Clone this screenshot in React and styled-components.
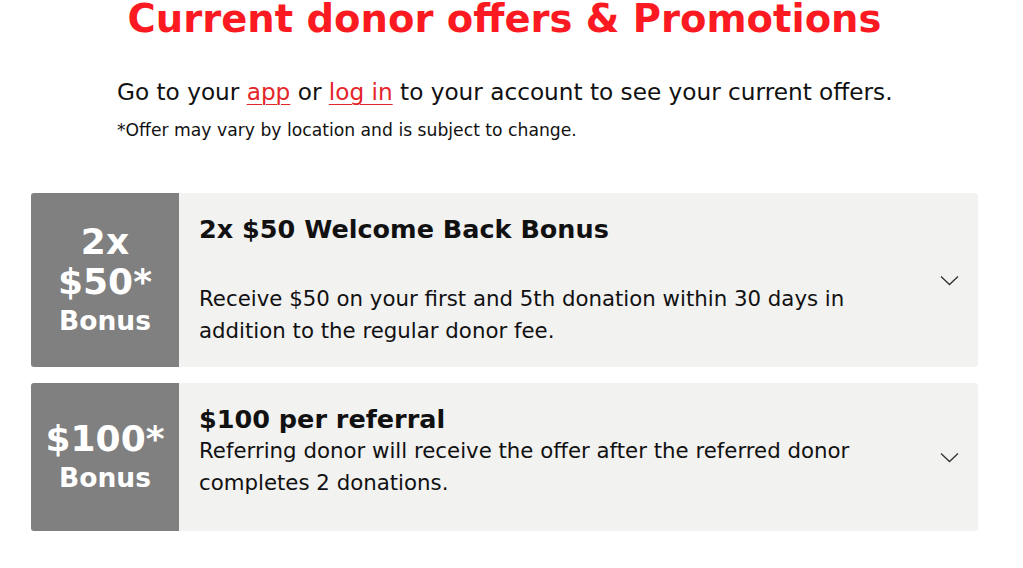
import styled, { createGlobalStyle } from "styled-components";

const GlobalStyle = createGlobalStyle`
  body {
    margin: 0;
    background: #fff;
    font-family: "DejaVu Sans", "Noto Sans", sans-serif;
    color: #111;
  }
`;

const offers = [
  {
    badge: ["2x", "$50*"],
    title: "2x $50 Welcome Back Bonus",
    text: "Receive $50 on your first and 5th donation within 30 days in addition to the regular donor fee.",
    spaced: true,
  },
  {
    badge: ["$100*"],
    title: "$100 per referral",
    text: "Referring donor will receive the offer after the referred donor completes 2 donations.",
    spaced: false,
  },
];

function Chevron() {
  return (
    <svg width="19" height="11" viewBox="0 0 19 11" fill="none">
      <path d="M1 1.5 L9.5 9.5 L18 1.5" stroke="#333" strokeWidth="1.3" />
    </svg>
  );
}

export default function App() {
  return (
    <>
      <GlobalStyle />
      <Page>
        <Heading>Current donor offers &amp; Promotions</Heading>
        <Intro>
          <Lead>
            Go to your <Link href="#">app</Link> or <Link href="#">log in</Link> to your
            account to see your current offers.
          </Lead>
          <Note>*Offer may vary by location and is subject to change.</Note>
        </Intro>
        <List>
          {offers.map((offer) => (
            <Card key={offer.title}>
              <Badge>
                {offer.badge.map((line) => (
                  <Amount key={line}>{line}</Amount>
                ))}
                <BadgeLabel>Bonus</BadgeLabel>
              </Badge>
              <Body $spaced={offer.spaced}>
                <Title>{offer.title}</Title>
                <Text>{offer.text}</Text>
              </Body>
              <Toggle>
                <Chevron />
              </Toggle>
            </Card>
          ))}
        </List>
      </Page>
    </>
  );
}

const Page = styled.div`
  width: 947px;
  margin-left: 31px;
`;

const Heading = styled.h1`
  margin: 0;
  text-align: center;
  color: #fb1a21;
  font-size: 38.5px;
  line-height: 38px;
  font-weight: 700;
`;

const Intro = styled.div`
  padding: 38px 0 0 86px;
`;

const Lead = styled.p`
  margin: 0;
  font-size: 23.2px;
  line-height: 32px;
`;

const Link = styled.a`
  color: #e4252a;
  text-decoration: underline;
  text-decoration-thickness: 1px;
  text-underline-offset: 4px;
`;

const Note = styled.p`
  margin: 10px 0 0;
  font-size: 17.2px;
  line-height: 24px;
`;

const List = styled.div`
  display: flex;
  flex-direction: column;
  gap: 16px;
  margin-top: 51px;
`;

const Card = styled.div`
  display: flex;
  background: #f2f2f1;
  border-radius: 3px;
  overflow: hidden;
`;

const Badge = styled.div`
  width: 148px;
  flex-shrink: 0;
  background: #808080;
  color: #fff;
  display: flex;
  flex-direction: column;
  align-items: center;
  justify-content: center;
  font-weight: 700;
`;

const Amount = styled.div`
  font-size: 36px;
  line-height: 40px;
`;

const BadgeLabel = styled.div`
  font-size: 26.5px;
  line-height: 34px;
  margin-top: 2px;
`;

const Body = styled.div`
  flex: 1;
  padding: ${(p) => (p.$spaced ? "20px 0 20px 20px" : "20px 0 32px 20px")};
  display: flex;
  flex-direction: column;
  gap: ${(p) => (p.$spaced ? "38px" : "0")};
`;

const Title = styled.h2`
  margin: 0;
  font-size: 25.5px;
  line-height: 32px;
  font-weight: 700;
`;

const Text = styled.p`
  margin: 0;
  max-width: 700px;
  font-size: 21.3px;
  line-height: 32px;
`;

const Toggle = styled.div`
  width: 58px;
  flex-shrink: 0;
  display: flex;
  align-items: center;
  justify-content: center;
`;
